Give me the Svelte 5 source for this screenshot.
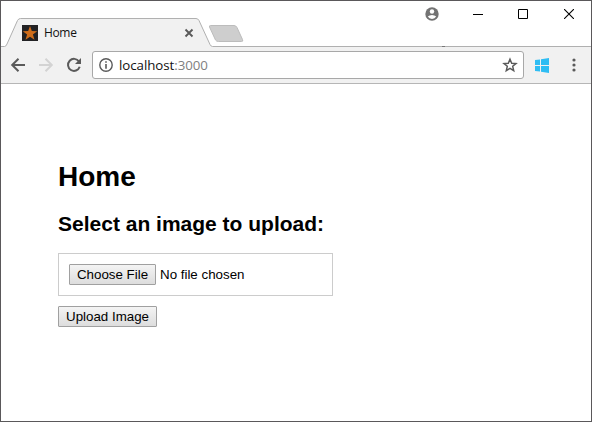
<script>
  let title = $state('Home');
  const host = 'localhost';
  const port = ':3000';
</script>

<div class="window">
  <header class="titlebar">
    <svg class="tabshape" width="590" height="46" viewBox="1 1 590 46">
      <path d="M1 46.5H4.500Q6 46.500 7 44L17.500 20.500Q18.500 18.500 20.500 18.500H196Q198 18.500 199 20.500L210 44.500Q211 46.500 212.500 46.500H591V47H1Z" fill="#f1f1f1" />
      <path d="M1 46.500H4.500Q6 46.500 7 44L17.500 20.500Q18.500 18.500 20.500 18.500H196Q198 18.500 199 20.500L210 44.500Q211 46.500 212.500 46.500H591" fill="none" stroke="#b0b0b0" />
      <path d="M442 46.500h3" stroke="#777" />
      <path d="M210.500 25.500H234Q236 25.500 237 27.500L242.500 39.500Q243.500 41.500 241.500 41.500H218.500Q216.500 41.500 215.500 40L209.500 27Q209 25.500 210.500 25.500Z" fill="#cecece" stroke="#bcbcbc" />
    </svg>
    <div class="tab">
      <svg width="16" height="16" viewBox="0 0 16 16">
        <rect width="16" height="16" fill="#222224" />
        <path d="M8 1L9.800 6.100L15.200 6.200L10.900 9.500L12.500 14.800L8 11.700L3.500 14.800L5.100 9.500L.8 6.200L6.200 6.100Z" fill="#cf6d1b" />
      </svg>
      <span class="tabtitle">{title}</span>
      <svg width="10" height="10" viewBox="0 0 10 10"><path d="M1.500 1.500l7 7M8.500 1.500l-7 7" stroke="#5a5a5a" stroke-width="1.900" /></svg>
    </div>
    <div class="controls">
      <svg width="14" height="14" viewBox="0 0 14 14">
        <circle cx="7" cy="7" r="6.700" fill="#737373" />
        <circle cx="7" cy="4.500" r="2.200" fill="#fff" />
        <path d="M2.800 9.600Q4.500 8 7 8T11.200 9.600Q9.800 11.900 7 11.900T2.800 9.600Z" fill="#fff" />
      </svg>
      <svg width="10" height="10" viewBox="0 0 10 10"><path d="M0 5.500H10" stroke="#000" /></svg>
      <svg width="10" height="10" viewBox="0 0 10 10"><path d="M.5.5h9v9h-9Z" fill="none" stroke="#000" /></svg>
      <svg width="10" height="10" viewBox="0 0 10 10"><path d="M0 0l10 10M10 0L0 10" stroke="#000" stroke-width="1.100" /></svg>
    </div>
  </header>

  <nav class="toolbar">
    <svg width="16" height="16" viewBox="0 0 16 16"><path d="M15 8H2.700M8.500 1.700L2.200 8L8.500 14.300" fill="none" stroke="#5a5a5a" stroke-width="2" /></svg>
    <svg class="forward" width="16" height="16" viewBox="0 0 16 16"><path d="M1 8H13.300M7.500 1.700L13.800 8L7.500 14.300" fill="none" stroke="#d3d3d3" stroke-width="2" /></svg>
    <svg class="reload" width="16" height="16" viewBox="0 0 16 16">
      <path d="M13 4.500A6 6 0 1 0 13.700 9.800" fill="none" stroke="#5a5a5a" stroke-width="2" />
      <path d="M15 1V7H9Z" fill="#5a5a5a" />
    </svg>
    <div class="address">
      <svg width="14" height="14" viewBox="0 0 14 14">
        <circle cx="7" cy="7" r="6.200" fill="none" stroke="#5a5a5a" stroke-width="1.400" />
        <path d="M7 3.200V4.800M7 6V10.800" stroke="#5a5a5a" stroke-width="1.600" />
      </svg>
      <span class="url">{host}<span>{port}</span></span>
      <svg width="16" height="16" viewBox="0 0 16 16"><path d="M8 2.200L9.700 6.200L14 6.500L10.700 9.300L11.700 13.600L8 11.300L4.300 13.600L5.300 9.300L2 6.500L6.300 6.200Z" fill="none" stroke="#5a5a5a" stroke-width="1.500" /></svg>
    </div>
    <svg class="windows" width="14" height="15" viewBox="0 0 14 15"><path d="M0 2L5 1.400V7H0ZM6 1.200L14 0V7H6ZM0 8H5V13.500L0 12.900ZM6 8H14V15L6 13.800Z" fill="#2fbdf3" /></svg>
    <svg class="menu" width="4" height="14" viewBox="0 0 4 14" fill="#5a5a5a"><circle cx="2" cy="2" r="1.600" /><circle cx="2" cy="7" r="1.600" /><circle cx="2" cy="12" r="1.600" /></svg>
  </nav>

  <main>
    <h1>{title}</h1>
    <h2>Select an image to upload:</h2>
    <form onsubmit={(e) => e.preventDefault()}>
      <div class="picker">
        <button class="choose" type="button">Choose File</button>
        <span>No file chosen</span>
      </div>
      <button class="upload" type="submit">Upload Image</button>
    </form>
  </main>
</div>

<style>
  :global(body) { margin: 0; }
  .window {
    box-sizing: border-box;
    width: 592px;
    height: 422px;
    border: 1px solid #5a585a;
    background: #fff;
    overflow: hidden;
    font-family: "Liberation Sans", Arial, sans-serif;
    color: #000;
  }
  svg { display: block; flex: none; }
  .titlebar { position: relative; display: flex; justify-content: space-between; height: 46px; }
  .tabshape { position: absolute; left: 0; top: 0; }
  .tab {
    position: relative;
    display: flex;
    align-items: center;
    box-sizing: border-box;
    width: 193px;
    height: 28px;
    margin-top: 18px;
    padding-left: 21px;
  }
  .tabtitle { flex: 1; padding-left: 6px; font: 12px/16px "Open Sans", sans-serif; letter-spacing: -0.35px; color: #111; }
  .controls {
    position: relative;
    display: flex;
    align-items: center;
    height: 14px;
    margin: 6px 17px 0 0;
  }
  .controls svg + svg { margin-left: 36px; }
  .controls svg:nth-child(2) { margin-left: 34px; }
  .controls svg:nth-child(3) { margin-left: 35px; }
  .toolbar {
    display: flex;
    align-items: center;
    box-sizing: border-box;
    height: 37px;
    padding: 0 15px 0 9px;
    background: #f1f1f1;
    border-bottom: 1px solid #b6b6b6;
  }
  .forward { margin-left: 12px; }
  .reload { margin-left: 12px; }
  .address {
    display: flex;
    align-items: center;
    box-sizing: border-box;
    width: 432px;
    height: 28px;
    margin-left: 10px;
    padding: 0 5px 0 6px;
    border: 1px solid #a8a8a8;
    border-radius: 3px;
    background: #fff;
  }
  .url { flex: 1; padding-left: 6px; font: 13.300px/18px "Open Sans", sans-serif; letter-spacing: -0.05px; color: #111; }
  .url span { color: #808080; }
  .windows { margin-left: 11px; }
  .menu { margin-left: auto; }
  main { padding: 77px 57px 0; }
  h1 { margin: 0; font-size: 28px; line-height: 32px; }
  h2 { margin: 18px 0 0; font-size: 21px; line-height: 26px; white-space: nowrap; }
  .picker {
    display: flex;
    align-items: center;
    box-sizing: border-box;
    width: 275px;
    height: 43px;
    margin: 16px 0 10px;
    padding-left: 10px;
    border: 1px solid #ccc;
    font-size: 13.333px;
  }
  .picker span { margin-left: 4px; white-space: nowrap; }
  button {
    display: block;
    box-sizing: border-box;
    height: 21px;
    padding: 0;
    border: 1px solid #a0a0a0;
    border-radius: 1px;
    background: linear-gradient(#f4f4f4, #dddddd);
    font: 13.333px/18px "Liberation Sans", Arial, sans-serif;
    color: #000;
    white-space: nowrap;
  }
  .choose { width: 87px; }
  .upload { width: 99px; }
</style>
